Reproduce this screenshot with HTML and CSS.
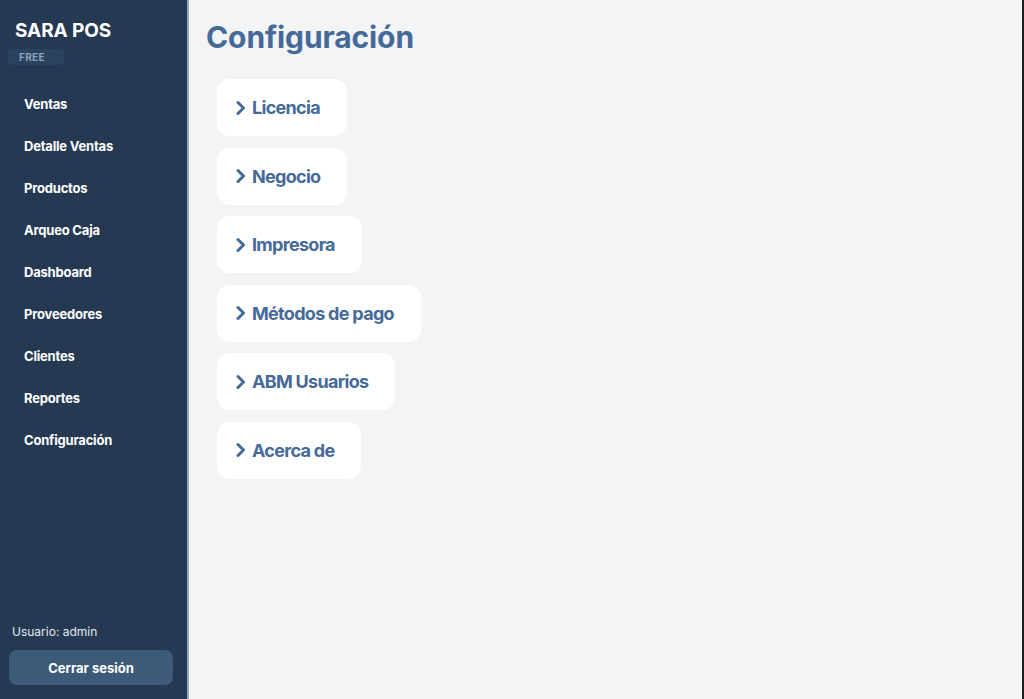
FILE: index.html
```html
<!DOCTYPE html>
<html lang="es">
<head>
<meta charset="utf-8">
<title>SARA POS - Configuración</title>
<link rel="stylesheet" href="styles.css">
</head>
<body>
    <div class="app">
        <aside class="sidebar">
            <div class="brand">
                <h1>SARA POS</h1>
                <span class="plan">FREE</span>
            </div>
            <nav class="menu">
                <a href="#">Ventas</a>
                <a href="#">Detalle Ventas</a>
                <a href="#">Productos</a>
                <a href="#">Arqueo Caja</a>
                <a href="#">Dashboard</a>
                <a href="#">Proveedores</a>
                <a href="#">Clientes</a>
                <a href="#">Reportes</a>
                <a href="#">Configuración</a>
            </nav>
            <div class="session">
                <p>Usuario: admin</p>
                <button class="logout">Cerrar sesión</button>
            </div>
        </aside>

        <main class="content">
            <h2 class="title">Configuración</h2>
            <div class="options">
                <button class="option"><svg viewBox="0 0 10 16"><path d="M2 2.5 L7.5 8 L2 13.5"/></svg>Licencia</button>
                <button class="option"><svg viewBox="0 0 10 16"><path d="M2 2.5 L7.5 8 L2 13.5"/></svg>Negocio</button>
                <button class="option"><svg viewBox="0 0 10 16"><path d="M2 2.5 L7.5 8 L2 13.5"/></svg>Impresora</button>
                <button class="option"><svg viewBox="0 0 10 16"><path d="M2 2.5 L7.5 8 L2 13.5"/></svg>Métodos de pago</button>
                <button class="option"><svg viewBox="0 0 10 16"><path d="M2 2.5 L7.5 8 L2 13.5"/></svg>ABM Usuarios</button>
                <button class="option"><svg viewBox="0 0 10 16"><path d="M2 2.5 L7.5 8 L2 13.5"/></svg>Acerca de</button>
            </div>
        </main>
    </div>
</body>
</html>
```

FILE: styles.css
```css
*{
    margin:0;
    padding:0;
    box-sizing:border-box;
}
body{
    background:#f3f4f6;
    font-family:Inter, "Noto Sans", Arial, sans-serif;
    height:100vh;
    overflow:hidden;
}
.app{
    display:flex;
    height:100%;
    border-right:2px solid #1e1e1e;
}
.sidebar{
    width:189px;
    flex-shrink:0;
    background:#253a52;
    color:#fff;
    display:flex;
    flex-direction:column;
    border-right:2px solid #9aa7b6;
}
.brand{
    padding:19px 8px 0 8px;
}
.brand h1{
    font-size:19px;
    font-weight:700;
    letter-spacing:-0.1px;
    padding-left:7px;
    line-height:24px;
}
.plan{
    display:inline-block;
    margin-top:6px;
    width:56px;
    height:16px;
    line-height:16px;
    padding-left:11px;
    font-size:10px;
    font-weight:700;
    color:#8ea2bb;
    background:#29435f;
    border-radius:4px;
    letter-spacing:0.3px;
}
.menu{
    display:flex;
    flex-direction:column;
    padding:24px 0 0 24px;
}
.menu a{
    color:#fff;
    text-decoration:none;
    font-size:13px;
    font-weight:700;
    height:42px;
    line-height:30px;
    letter-spacing:-0.2px;
}
.session{
    margin-top:auto;
    padding:0 14px 14px 9px;
}
.session p{
    font-size:12px;
    color:#e3e8ef;
    padding-left:3px;
    margin-bottom:11px;
}
.logout{
    width:164px;
    height:35px;
    border:none;
    border-radius:8px;
    background:#3d5a78;
    color:#fff;
    font-family:inherit;
    font-size:13px;
    font-weight:700;
    cursor:pointer;
}
.content{
    flex:1;
    padding:17px 0 0 17px;
}
.title{
    font-size:30px;
    font-weight:700;
    color:#456a99;
    line-height:40px;
    letter-spacing:-0.1px;
}
.options{
    display:flex;
    flex-direction:column;
    align-items:flex-start;
    gap:11.5px;
    padding:22px 0 0 11px;
}
.option{
    display:flex;
    align-items:center;
    height:57px;
    padding:0 27px 0 19px;
    border:none;
    border-radius:13px;
    background:#fff;
    color:#456a99;
    font-family:inherit;
    font-size:18px;
    font-weight:700;
    letter-spacing:-0.7px;
    cursor:pointer;
}
.option svg{
    width:10px;
    height:16px;
    margin-right:6px;
    fill:none;
    stroke:#456a99;
    stroke-width:3;
    stroke-linecap:round;
    stroke-linejoin:round;
}
```
